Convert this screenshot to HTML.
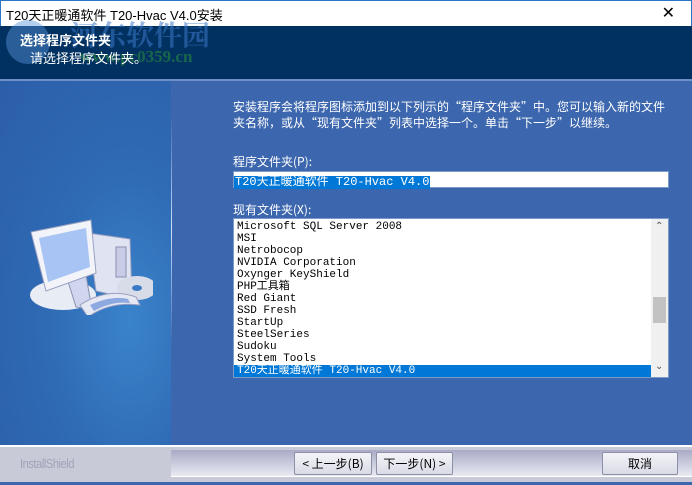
<!DOCTYPE html>
<html><head><meta charset="utf-8"><style>
*{margin:0;padding:0;box-sizing:border-box}
body{width:692px;height:485px;overflow:hidden;position:relative;background:#3c66ad;font-family:"Liberation Sans","Noto Sans CJK SC",sans-serif;}
.abs{position:absolute}
.title{left:0;top:0;width:692px;height:26px;background:#fff;border:1px solid #2b74c6;border-bottom:none;font-size:13px;color:#000;padding:4px 0 0 5px;}
.hdr{left:0;top:26px;width:692px;height:53px;background:#003161;}
.btn{height:23px;background:linear-gradient(#f4f4f8,#d9dbe6);border:1px solid #8d90a8;border-radius:2px;font-size:12px;text-align:center;line-height:21px;font-family:"Noto Sans CJK SC",sans-serif;}
.li{height:12px;line-height:12px;font-family:"Liberation Mono","Noto Sans CJK SC",monospace;font-size:11px;padding-left:3px;white-space:nowrap;}
</style></head><body>
<div class="abs title">T20天正暖通软件 T20-Hvac V4.0安装<span style="position:absolute;right:16px;top:2px;font-size:16px">✕</span></div>
<div class="abs hdr"></div>
<div class="abs" style="left:0;top:79px;width:692px;height:2px;background:#6e8fc8"></div>
<div class="abs" style="left:6px;top:20px;width:44px;height:44px;border-radius:50%;background:rgba(90,150,220,.45)"></div>
<div class="abs" style="left:70px;top:14px;color:rgba(60,120,200,.55);font-size:28px;font-weight:bold;font-family:'Noto Serif CJK SC',serif">河东软件园</div>
<div class="abs" style="left:80px;top:47px;color:rgba(40,140,60,.6);font-size:17px;font-weight:bold;font-family:'Liberation Serif',serif">www.pc0359.cn</div>
<div class="abs" style="left:20px;top:30px;color:#fff;font-size:13px;font-weight:bold">选择程序文件夹</div>
<div class="abs" style="left:30px;top:48px;color:#fff;font-size:13px">请选择程序文件夹。</div>
<div class="abs" style="left:0;top:81px;width:171px;height:364px;background:radial-gradient(ellipse at 130px 240px,#3a84cc 0%,#2f6ab4 45%,#2c5ea8 100%)"></div>
<div class="abs" style="left:171px;top:115px;width:1px;height:230px;background:linear-gradient(rgba(255,255,255,0),#cfe0ff,rgba(255,255,255,0))"></div>
<svg class="abs" style="left:28px;top:195px" width="125" height="120" viewBox="0 0 125 120">
<ellipse cx="35" cy="100" rx="33" ry="15" fill="#e8ecf4"/>
<path d="M60 38 L102 44 L104 104 L68 96 Z" fill="#dfe3f2" stroke="#9aa0c0"/>
<rect x="88" y="52" width="10" height="30" fill="#c8cce6" stroke="#8a90b0"/>
<path d="M38 80 L58 80 L64 115 L48 112 Z" fill="#d0d6ee" stroke="#8890b0"/>
<path d="M3 37 L63 25 L68 78 L18 96 Z" fill="#f2f4fa" stroke="#9aa0c0"/>
<path d="M11 43 L58 33 L62 72 L20 87 Z" fill="#a8c4f4"/>
<ellipse cx="124" cy="98" rx="20" ry="12" fill="#d8dce8" transform="translate(-15 -5)"/>
<ellipse cx="109" cy="93" rx="5" ry="3" fill="#3a7ac4"/>
<path d="M52 110 Q80 92 108 102 L112 110 Q82 106 60 122 Z" fill="#e6e8f4" stroke="#9aa0c0"/>
<path d="M62 110 Q84 100 100 104 L102 108 Q84 106 66 116Z" fill="#8ea8e0"/>
</svg>
<div class="abs" style="left:233px;top:99px;color:#fff;font-size:12px;line-height:16px;width:445px;font-family:'Noto Sans CJK SC',sans-serif">安装程序会将程序图标添加到以下列示的“程序文件夹”中。您可以输入新的文件<br>夹名称，或从“现有文件夹”列表中选择一个。单击“下一步”以继续。</div>
<div class="abs" style="left:233px;top:153px;color:#fff;font-size:12px;font-family:'Noto Sans CJK SC',sans-serif">程序文件夹(P):</div>
<div class="abs" style="left:233px;top:171px;width:436px;height:17px;background:#fff;border:1px solid #7a9ac8"><span class="li" style="display:inline-block;background:#0078d7;color:#fff;padding:0 1px;margin-top:1px;height:13px;font-size:12px">T20天正暖通软件 T20-Hvac V4.0</span></div>
<div class="abs" style="left:233px;top:201px;color:#fff;font-size:12px;font-family:'Noto Sans CJK SC',sans-serif">现有文件夹(X):</div>
<div class="abs" style="left:233px;top:218px;width:436px;height:160px;background:#fff;border:1px solid #7a9ac8;padding-top:2px">
<div class="li">Microsoft SQL Server 2008</div><div class="li">MSI</div><div class="li">Netrobocop</div><div class="li">NVIDIA Corporation</div><div class="li">Oxynger KeyShield</div><div class="li">PHP工具箱</div><div class="li">Red Giant</div><div class="li">SSD Fresh</div><div class="li">StartUp</div><div class="li">SteelSeries</div><div class="li">Sudoku</div><div class="li">System Tools</div>
<div class="li" style="background:#0078d7;color:#fff;width:418px">T20天正暖通软件 T20-Hvac V4.0</div>
<div class="abs" style="right:0;top:0;width:17px;height:158px;background:#f0f0f0"><div class="abs" style="left:2px;top:78px;width:13px;height:26px;background:#c2c2c2"></div><div class="abs" style="left:4px;top:2px;font-size:10px;color:#555">⌃</div><div class="abs" style="left:4px;top:142px;font-size:10px;color:#555">⌄</div></div>
</div>
<div class="abs" style="left:0;top:445px;width:692px;height:2px;background:#fff"></div>
<div class="abs" style="left:0;top:447px;width:692px;height:35px;background:#c9cad8"></div>
<div class="abs" style="left:171px;top:450px;width:521px;height:27px;background:linear-gradient(#a9abc6,#e9eaf2);border-bottom:1px solid #fff"></div>
<div class="abs" style="left:0;top:482px;width:692px;height:3px;background:#3c66ad"></div>
<div class="abs" style="left:20px;top:456px;color:#a0a2b6;font-size:13px;letter-spacing:-0.5px;transform:scaleX(.85);transform-origin:left">InstallShield</div>
<div class="abs btn" style="left:294px;top:452px;width:78px">&lt; 上一步(B)</div>
<div class="abs btn" style="left:376px;top:452px;width:77px">下一步(N) &gt;</div>
<div class="abs btn" style="left:602px;top:452px;width:76px">取消</div>
</body></html>
